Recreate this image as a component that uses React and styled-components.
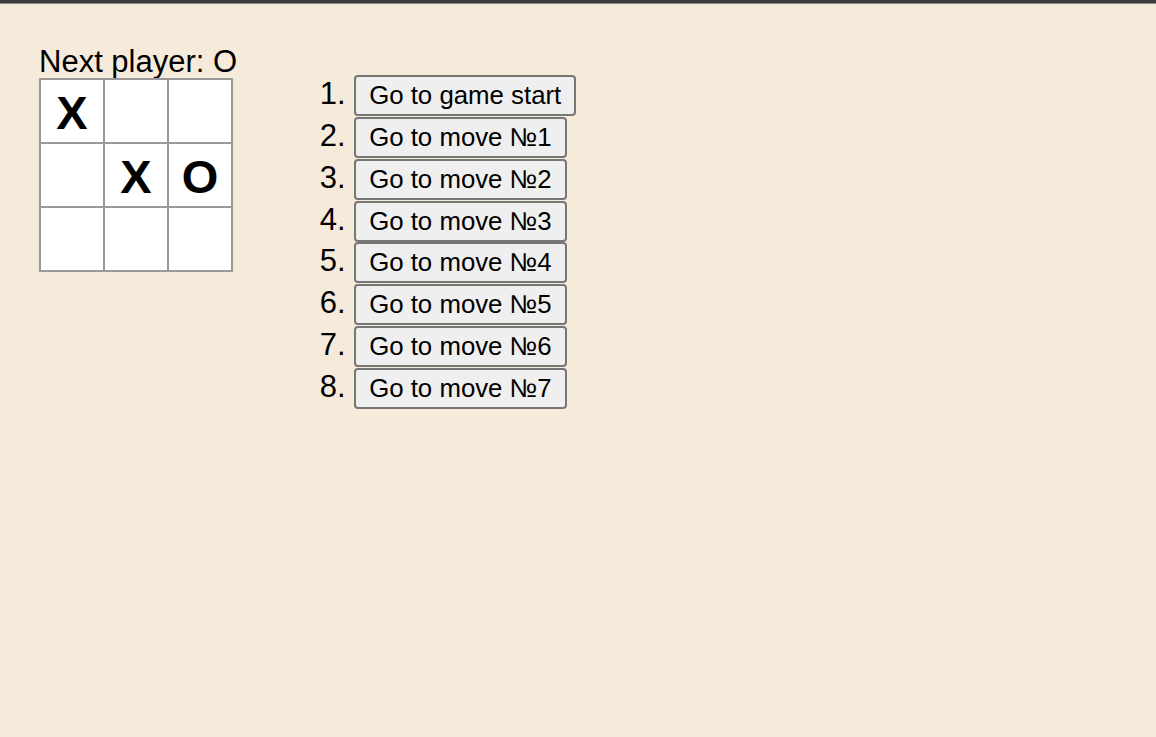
import React from "react";
import styled, { createGlobalStyle } from "styled-components";

const Global = createGlobalStyle`
  html, body { margin: 0; padding: 0; background: #f6ebda; }
  body { font-family: "Liberation Sans", Arial, sans-serif; color: #000; }
`;

const Page = styled.div`
  min-height: 737px;
  background: #f6ebda;
`;

const TopBar = styled.div`
  height: 3px;
  background: #3b3b3b;
  border-bottom: 1px solid #8a8a8a;
`;

const Game = styled.div`
  display: flex;
  flex-direction: row;
  padding: 42px 0 0 40px;
`;

const BoardCol = styled.div`
  display: flex;
  flex-direction: column;
`;

const Status = styled.div`
  font-size: 31px;
  line-height: 32px;
  height: 32px;
  margin-left: -1px;
  white-space: nowrap;
`;

const Board = styled.div`
  display: grid;
  grid-template-columns: repeat(3, 62px);
  grid-auto-rows: 62px;
  gap: 2px;
  padding: 2px;
  width: fit-content;
  background: #999;
  margin-left: -1px;
`;

const Square = styled.button`
  all: unset;
  box-sizing: border-box;
  width: 62px;
  height: 62px;
  background: #fff;
  display: flex;
  align-items: center;
  justify-content: center;
  font-family: "Liberation Sans", Arial, sans-serif;
  font-weight: bold;
  font-size: 47px;
  line-height: 1;
  padding-top: 2px;
`;

const Info = styled.div`
  margin-left: 40px;
`;

const Moves = styled.ol`
  margin: 29px 0 0;
  padding-left: 77px;
  font-size: 31px;
`;

const Move = styled.li`
  height: 41.86px;
  &::marker { font-family: "Liberation Sans", Arial, sans-serif; }
`;

const MoveButton = styled.button`
  box-sizing: border-box;
  height: 41px;
  padding: 0 13px;
  margin-left: 0;
  font-family: "Liberation Sans", Arial, sans-serif;
  font-size: 25.8px;
  color: #000;
  background: #efefef;
  border: 2px solid #767676;
  border-radius: 4px;
  vertical-align: baseline;
`;

const cells = ["X", "", "", "", "X", "O", "", "", ""];
const moves = [
  "Go to game start",
  "Go to move №1",
  "Go to move №2",
  "Go to move №3",
  "Go to move №4",
  "Go to move №5",
  "Go to move №6",
  "Go to move №7",
];

export default function App() {
  return (
    <Page>
      <Global />
      <TopBar />
      <Game>
        <BoardCol>
          <Status>Next player: O</Status>
          <Board>
            {cells.map((c, i) => (
              <Square key={i}>{c}</Square>
            ))}
          </Board>
        </BoardCol>
        <Info>
          <Moves>
            {moves.map((m) => (
              <Move key={m}>
                <MoveButton>{m}</MoveButton>
              </Move>
            ))}
          </Moves>
        </Info>
      </Game>
    </Page>
  );
}
